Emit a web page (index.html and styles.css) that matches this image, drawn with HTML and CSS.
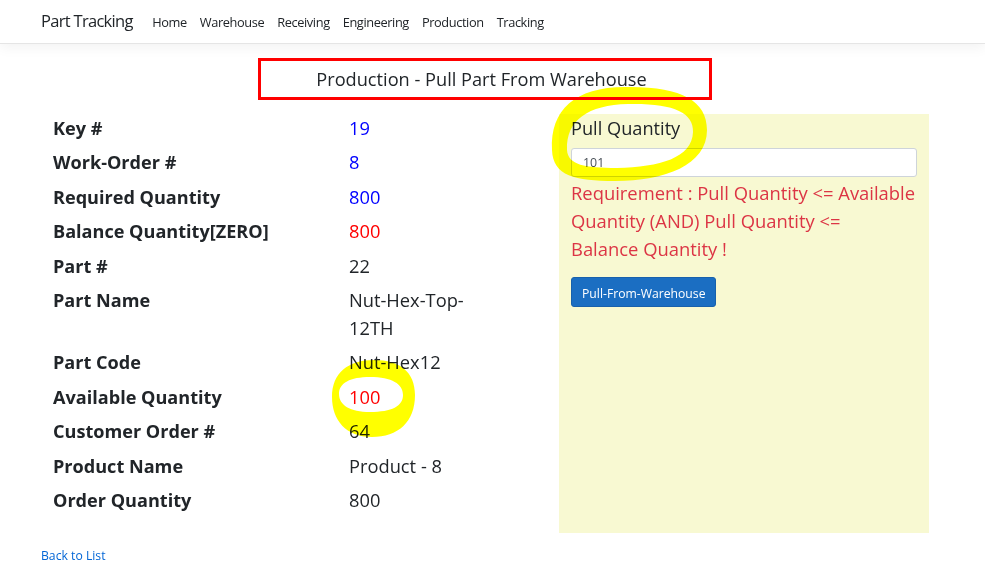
FILE: index.html
```html
<!DOCTYPE html>
<html>
<head>
<meta charset="utf-8">
<title>Production - Pull Part From Warehouse</title>
<link rel="stylesheet" href="styles.css">
</head>
<body>
<header class="navbar">
  <a class="brand" href="#">Part Tracking</a>
  <nav class="nav">
    <a href="#">Home</a>
    <a href="#">Warehouse</a>
    <a href="#">Receiving</a>
    <a href="#">Engineering</a>
    <a href="#">Production</a>
    <a href="#">Tracking</a>
  </nav>
</header>
<main class="main">
  <h2 class="title-box">Production - Pull Part From Warehouse</h2>
  <div class="content">
    <dl class="details">
      <dt>Key #</dt><dd class="blue">19</dd>
      <dt>Work-Order #</dt><dd class="blue">8</dd>
      <dt>Required Quantity</dt><dd class="blue">800</dd>
      <dt>Balance Quantity[ZERO]</dt><dd class="red">800</dd>
      <dt>Part #</dt><dd>22</dd>
      <dt>Part Name</dt><dd>Nut-Hex-Top-12TH</dd>
      <dt>Part Code</dt><dd>Nut-Hex12</dd>
      <dt>Available Quantity</dt><dd class="red">100</dd>
      <dt>Customer Order #</dt><dd>64</dd>
      <dt>Product Name</dt><dd>Product - 8</dd>
      <dt>Order Quantity</dt><dd>800</dd>
    </dl>
    <form class="panel">
      <label class="panel-label" for="qty">Pull Quantity</label>
      <input id="qty" class="input" type="text" value="101">
      <p class="error">Requirement : Pull Quantity &lt;= Available<br>Quantity (AND) Pull Quantity &lt;=<br>Balance Quantity !</p>
      <button type="button" class="btn">Pull-From-Warehouse</button>
    </form>
  </div>
  <a class="back" href="#">Back to List</a>
</main>
<svg class="marks" width="985" height="575" viewBox="0 0 985 575">
  <path fill="#ffff00" fill-rule="evenodd" d="M 552 150 C 550 110, 575 87, 625 87 C 680 86, 707 100, 707 130 C 707 165, 665 181, 615 181 C 575 181, 553 176, 552 150 Z M 567 150 C 566 120, 588 105, 628 104 C 672 103, 694 112, 693 132 C 692 158, 660 167, 617 168 C 585 168, 568 165, 567 150 Z"/>
  <path fill="#ffff00" fill-rule="evenodd" d="M 374 360 C 400 360, 415 372, 415 395 C 415 422, 398 437, 372 437 C 346 437, 332 420, 332 397 C 332 373, 348 360, 374 360 Z M 370 377 C 392 377, 403 384, 403 395 C 403 406, 392 412, 370 412 C 350 412, 339 405, 339 394 C 339 383, 350 377, 370 377 Z"/>
</svg>
</body>
</html>
```

FILE: styles.css
```css
* { box-sizing: border-box; }
html, body { margin: 0; padding: 0; }
body {
  position: relative;
  width: 985px;
  height: 575px;
  overflow: hidden;
  background: #fff;
  color: #212529;
  font-family: "Open Sans", "Noto Sans", sans-serif;
}
a { text-decoration: none; }

.navbar {
  height: 44px;
  display: flex;
  align-items: center;
  padding-left: 41px;
  border-bottom: 1px solid #e5e5e5;
  box-shadow: 0 4px 12px rgba(0,0,0,0.05);
}
.brand {
  font-size: 16.5px;
  letter-spacing: -0.7px;
  color: #212529;
  margin-right: 13px;
  margin-top: -2px;
}
.nav { display: flex; }
.nav a {
  font-size: 12.8px;
  letter-spacing: -0.4px;
  color: #212529;
  padding: 0 6.5px;
  margin-top: 1px;
}

.main { padding: 0 41px; }
.title-box {
  margin: 14px 0 0 217px;
  width: 454px;
  height: 42px;
  border: 3px solid #ff0000;
  padding-right: 7px;
  font-weight: normal;
  font-size: 18.2px;
  line-height: 37px;
  text-align: center;
  color: #212529;
}

.content {
  display: flex;
  margin-top: 14px;
}
.details {
  width: 518px;
  margin: 0;
  padding: 0 0 0 12px;
  display: grid;
  grid-template-columns: 296px 140px;
  align-content: start;
  line-height: 28px;
  row-gap: 6.4px;
}
.details dt { font-weight: 700; font-size: 18.1px; }
.details dd { margin: 0; font-size: 18.3px; }
.details .blue { color: #0000ff; }
.details .red { color: #ff0000; }

.panel {
  width: 370px;
  height: 419px;
  background: #f8f9d2;
  padding: 0 12px 12px;
  display: flex;
  flex-direction: column;
  align-items: flex-start;
}
.panel-label {
  font-size: 18.2px;
  line-height: 28px;
}
.input {
  margin-top: 6px;
  width: 346px;
  height: 29px;
  border: 1px solid #ced4da;
  border-radius: 3px;
  background: #fff;
  padding: 0 11px;
  font-family: inherit;
  font-size: 12.4px;
  color: #495057;
}
.error {
  margin: 2px 0 0;
  width: 350px;
  color: #dc3545;
  font-size: 18.4px;
  line-height: 28px;
  white-space: nowrap;
}
.btn {
  margin-top: 14px;
  height: 30px;
  padding: 2px 10px 0;
  background: #1b6ec2;
  border: 1px solid #1861ac;
  border-radius: 3px;
  color: #fff;
  font-family: inherit;
  font-size: 12.2px;
}

.back {
  display: inline-block;
  margin-top: 13px;
  font-size: 12.2px;
  line-height: 20px;
  color: #0366d6;
}

.marks {
  position: absolute;
  top: 0;
  left: 0;
  pointer-events: none;
  mix-blend-mode: multiply;
}
```
